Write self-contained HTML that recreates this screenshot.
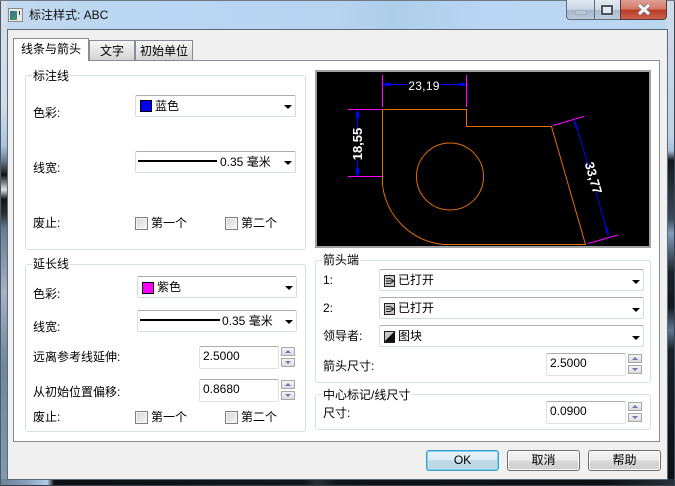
<!DOCTYPE html>
<html><head><meta charset="utf-8"><style>
html,body{margin:0;padding:0;width:675px;height:486px;overflow:hidden;background:#b9d5f0}
body{font-family:"Liberation Sans","WenQuanYi Zen Hei","Noto Sans CJK SC",sans-serif;font-size:12px;color:#000;position:relative}
div,span{position:absolute;box-sizing:border-box}
.t{white-space:nowrap;line-height:16px;height:16px}
.g{border:1px solid #d5dfe5;border-radius:3px;background:#fff}
.lg{background:#fff;padding:0 1px}
.c{background:#fff;border:1px solid #d5dbe2;border-top-color:#abadb3;border-radius:2px;height:22px}
.ar{width:0;height:0;border-left:4px solid transparent;border-right:4px solid transparent;border-top:4px solid #000}
.e{background:#fff;border:1px solid #dde1e7;border-top-color:#abadb3;border-radius:2px;height:23px;width:80px;padding-left:3px;line-height:18px}
.s{width:14px;height:9px;border:1px solid #a9a9a9;background:linear-gradient(#f4f4f4,#dcdcdc)}
.u:after,.d:after{content:"";position:absolute;left:3px;top:2px;border-left:3px solid transparent;border-right:3px solid transparent}
.u:after{border-bottom:3px solid #6a74b8}
.d:after{border-top:3px solid #6a74b8}
.k{width:13px;height:13px;border:1px solid #7f8080;background:linear-gradient(135deg,#d4d4d4,#f8f8f8);box-shadow:inset 0 0 0 1px #f4f4f4}
.b{width:73px;height:21px;border:1px solid #707070;border-radius:3px;background:linear-gradient(#f2f2f2 0,#ebebeb 48%,#d8d8d8 52%,#cfcfcf 100%);text-align:center;line-height:19px;box-shadow:inset 0 0 0 1px #fbfbfb}
.tab{background:linear-gradient(#f6f6f6,#d4d4d4);border:1px solid #898c95;text-align:center;line-height:21px}
.sw{width:12px;height:12px;border:1px solid #000}
</style></head><body>
<!-- glass frame -->
<div style="left:0;top:0;width:675px;height:486px;background:linear-gradient(90deg,#c3d8ee,#b8d6f3 25%,#b6d3f0 50%,#aecde9 58%,#b8d6f3 72%,#bcd7f0)"></div>
<div style="left:0;top:0;width:7px;height:486px;background:linear-gradient(#d6dfe9 0,#cfdbe8 22%,#a9c4e2 30%,#6e7f93 33%,#0e1012 36%,#dfe3e8 39%,#141518 41%,#2a2d33 44%,#667c94 47%,#a4b3c4 60%,#6f86a0 75%,#8399b0 100%)"></div>
<div style="left:667px;top:0;width:8px;height:486px;background:linear-gradient(#cfdcea 0,#bcd3ea 28%,#a3c1de 31%,#15181c 33%,#374a5e 45%,#7e9dbd 48%,#1b2129 56%,#14181d 63%,#5c7999 68%,#1a2028 72%,#0c0f13 100%)"></div>
<div style="left:0;top:479px;width:675px;height:7px;background:linear-gradient(90deg,#6d8298 0,#86a0bc 4%,#b0cdea 7%,#0d1114 8%,#12181c 45%,#2a3036 47%,#10151a 50%,#0d1114 90%,#2b3138 100%)"></div>
<div style="left:0;top:485px;width:675px;height:1px;background:#394049"></div>
<div style="left:0;top:0;width:1px;height:486px;background:#4e5a66"></div>
<div style="left:674px;top:0;width:1px;height:486px;background:#3b4550"></div>
<div style="left:0;top:0;width:675px;height:1px;background:#6c7a88"></div>
<!-- client -->
<div style="left:7px;top:29px;width:661px;height:451px;background:#f0f0f0;border:1px solid #5d6a76"></div>
<!-- title -->
<div style="left:8px;top:8px;width:15px;height:14px;background:#e8e8e8;border:1px solid #8a8a8a"></div>
<div style="left:10px;top:11px;width:7px;height:9px;background:linear-gradient(135deg,#3a6f8c,#3d9a70)"></div>
<div style="left:19px;top:11px;width:1px;height:4px;background:#333"></div>
<div class="t" style="left:29px;top:7px;color:#111">标注样式: ABC</div>
<!-- caption buttons -->
<div style="left:566px;top:0;width:28px;height:20px;border:1px solid #5e6c7b;border-top:0;border-right:0;border-radius:0 0 0 4px;background:linear-gradient(#dfe8f1,#c6d4e2 50%,#a3b5c7 55%,#bccbda)"></div>
<div style="left:575px;top:10px;width:12px;height:5px;background:#b9c6d3;border:1px solid #a1b0bf"></div>
<div style="left:594px;top:0;width:27px;height:20px;border:1px solid #5e6c7b;border-top:0;border-right:0;background:linear-gradient(#e2eaf2,#ccd8e4 50%,#a8bacb 55%,#c0cedc)"></div>
<div style="left:601px;top:5px;width:12px;height:10px;border:2px solid #4a5560;background:#e4eaf0;box-shadow:0 0 1px #fff"></div>
<div style="left:620px;top:0;width:47px;height:20px;border:1px solid #5a3a38;border-top:0;border-radius:0 0 4px 0;background:linear-gradient(#dca096,#d67a68 45%,#ba3c28 55%,#c9624f)"></div>
<svg style="position:absolute;left:636px;top:3px" width="16" height="13"><path d="M3 2L13 11M13 2L3 11" stroke="#6b6f74" stroke-width="4.5"/><path d="M3 2L13 11M13 2L3 11" stroke="#f4f4f4" stroke-width="3"/></svg>
<!-- tab pane -->
<div style="left:13px;top:60px;width:647px;height:382px;background:#fff;border:1px solid #898c95"></div>
<div class="tab" style="left:89px;top:40px;width:46px;height:21px">文字</div>
<div class="tab" style="left:135px;top:40px;width:58px;height:21px">初始单位</div>
<div class="tab" style="left:13px;top:38px;width:76px;height:23px;background:#fff;border-bottom:0;line-height:20px">线条与箭头</div>
<!-- group 1 -->
<div class="g" style="left:25px;top:75px;width:281px;height:175px"></div>
<div class="t lg" style="left:32px;top:68px">标注线</div>
<div class="t" style="left:33px;top:105px">色彩:</div>
<div class="c" style="left:135px;top:95px;width:161px"></div>
<div class="sw" style="left:140px;top:100px;background:#0000ff"></div>
<div class="t" style="left:155px;top:98px">蓝色</div>
<div class="ar" style="left:284px;top:105px"></div>
<div class="t" style="left:33px;top:160px">线宽:</div>
<div class="c" style="left:135px;top:151px;width:161px"></div>
<div style="left:138px;top:160px;width:79px;height:2px;background:#000"></div>
<div class="t" style="left:220px;top:154px">0.35 毫米</div>
<div class="ar" style="left:284px;top:161px"></div>
<div class="t" style="left:33px;top:215px">废止:</div>
<div class="k" style="left:135px;top:217px"></div>
<div class="t" style="left:151px;top:215px">第一个</div>
<div class="k" style="left:225px;top:217px"></div>
<div class="t" style="left:241px;top:215px">第二个</div>
<!-- group 2 -->
<div class="g" style="left:25px;top:264px;width:281px;height:168px"></div>
<div class="t lg" style="left:32px;top:256px">延长线</div>
<div class="t" style="left:33px;top:286px">色彩:</div>
<div class="c" style="left:137px;top:276px;width:160px"></div>
<div class="sw" style="left:142px;top:282px;background:#ff00ff"></div>
<div class="t" style="left:157px;top:279px">紫色</div>
<div class="ar" style="left:285px;top:286px"></div>
<div class="t" style="left:33px;top:319px">线宽:</div>
<div class="c" style="left:137px;top:310px;width:160px"></div>
<div style="left:140px;top:319px;width:80px;height:2px;background:#000"></div>
<div class="t" style="left:222px;top:313px">0.35 毫米</div>
<div class="ar" style="left:285px;top:320px"></div>
<div class="t" style="left:33px;top:349px">远离参考线延伸:</div>
<div class="e" style="left:199px;top:346px">2.5000</div>
<div class="s u" style="left:281px;top:347px"></div>
<div class="s d" style="left:281px;top:358px"></div>
<div class="t" style="left:33px;top:384px">从初始位置偏移:</div>
<div class="e" style="left:199px;top:379px">0.8680</div>
<div class="s u" style="left:281px;top:380px"></div>
<div class="s d" style="left:281px;top:391px"></div>
<div class="t" style="left:33px;top:409px">废止:</div>
<div class="k" style="left:135px;top:411px"></div>
<div class="t" style="left:151px;top:409px">第一个</div>
<div class="k" style="left:225px;top:411px"></div>
<div class="t" style="left:241px;top:409px">第二个</div>
<!-- preview -->
<div style="left:315px;top:70px;width:336px;height:178px;background:#000;border:2px solid #a0a0a0"></div>
<svg style="position:absolute;left:0;top:0" width="675" height="486" shape-rendering="crispEdges">
<g fill="none" stroke="#e07000" stroke-width="1">
<path shape-rendering="auto" d="M382.5 109.5H466.5V126.5H551.5L585.5 244.5H443.5A68 68 0 0 1 382.5 185V109.5Z"/>
<circle shape-rendering="auto" cx="450" cy="176.5" r="33.5"/>
</g>
<g fill="none" stroke="#ff00ff" stroke-width="1">
<path d="M382.5 75V107M466.5 75V107M348 109.5H382M348 176.5H382"/>
<path shape-rendering="auto" d="M553 125.5L584 116.5M588 243.5L618 235"/>
</g>
<g fill="none" stroke="#0000ff" stroke-width="1">
<path d="M383 84.5H408M440 84.5H466M357.5 110V129M357.5 160V176"/>
<path shape-rendering="auto" d="M574.5 119.5L589 168M596 192L608.5 236.5"/>
<path d="M385 83.5H390V85.5H385M459 83.5H464V85.5H459M356.5 112V118H358.5V112M356.5 168V174H358.5V168"/>
<path shape-rendering="auto" d="M575 122L577 129M606 227L608 234" stroke-width="2"/>
</g>
</svg>
<div class="t" style="left:408px;top:78px;color:#fff;letter-spacing:.3px;width:32px;text-align:center">23,19</div>
<div class="t" style="left:338px;top:136px;width:40px;text-align:center;color:#fff;font-weight:bold;font-size:13px;transform:rotate(-90deg)">18,55</div>
<div class="t" style="left:573px;top:170px;width:40px;text-align:center;color:#fff;font-weight:bold;font-size:13px;transform:rotate(74deg)">33,77</div>
<!-- arrows group -->
<div class="g" style="left:315px;top:260px;width:336px;height:123px"></div>
<div class="t lg" style="left:322px;top:252px">箭头端</div>
<div class="t" style="left:323px;top:272px">1:</div>
<div class="c" style="left:379px;top:269px;width:265px"></div>
<div class="t" style="left:398px;top:272px">已打开</div>
<div class="ar" style="left:632px;top:280px"></div>
<div class="t" style="left:323px;top:300px">2:</div>
<div class="c" style="left:379px;top:297px;width:265px"></div>
<div class="t" style="left:398px;top:300px">已打开</div>
<div class="ar" style="left:632px;top:308px"></div>
<div class="t" style="left:323px;top:328px">领导者:</div>
<div class="c" style="left:379px;top:325px;width:265px"></div>
<div class="t" style="left:398px;top:328px">图块</div>
<div class="ar" style="left:632px;top:336px"></div>
<svg style="position:absolute;left:384px;top:275px" width="12" height="68">
<g stroke="#222" fill="#c8c8c8" stroke-width="1"><rect x=".5" y=".5" width="10" height="11"/><rect x=".5" y="28.5" width="10" height="11"/><rect x=".5" y="56.5" width="10" height="11"/></g>
<path d="M2 3.5H7M2 6H10L7 4M10 6L7 8M2 8.5H7M2 31.5H7M2 34H10L7 32M10 34L7 36M2 36.5H7" stroke="#222" fill="none"/>
<path d="M1 67L11 57V67Z" fill="#111"/><path d="M1 67L11 57" stroke="#111" stroke-width="1.5"/>
</svg>
<div class="t" style="left:323px;top:358px">箭头尺寸:</div>
<div class="e" style="left:546px;top:353px">2.5000</div>
<div class="s u" style="left:628px;top:354px"></div>
<div class="s d" style="left:628px;top:365px"></div>
<!-- center group -->
<div class="g" style="left:315px;top:394px;width:336px;height:36px"></div>
<div class="t lg" style="left:322px;top:387px">中心标记/线尺寸</div>
<div class="t" style="left:323px;top:405px">尺寸:</div>
<div class="e" style="left:546px;top:401px">0.0900</div>
<div class="s u" style="left:628px;top:402px"></div>
<div class="s d" style="left:628px;top:413px"></div>
<!-- buttons -->
<div class="b" style="left:426px;top:450px;border:1px solid #3c9fd0;background:linear-gradient(#e6f2f8 0,#dcebf3 48%,#bcd6e4 52%,#c2dbe8 100%);box-shadow:inset 0 0 0 1px #7fd0ee">OK</div>
<div class="b" style="left:507px;top:450px">取消</div>
<div class="b" style="left:588px;top:450px">帮助</div>
</body></html>
